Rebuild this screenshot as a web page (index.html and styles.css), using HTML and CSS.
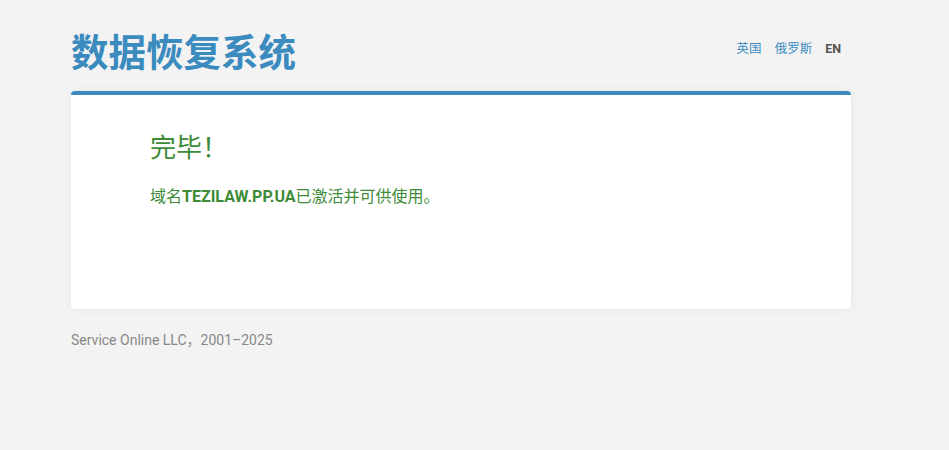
FILE: index.html
```html
<!DOCTYPE html>
<html lang="zh">
<head>
    <meta charset="UTF-8">
    <meta name="viewport" content="width=device-width, initial-scale=1.0">
    <title>数据恢复系统</title>
    <link rel="stylesheet" href="styles.css">
</head>
<body>

    <div class="page">
        <div class="header">
            <h1 class="logo">数据恢复系统</h1>
            <div class="langs">
                <a href="#">英国</a>
                <a href="#">俄罗斯</a>
                <span class="current">EN</span>
            </div>
        </div>

        <div class="card">
            <h2 class="done">完毕！</h2>
            <p class="message">域名<strong>TEZILAW.PP.UA</strong>已激活并可供使用。</p>
        </div>

        <div class="footer">Service Online LLC，2001–2025</div>
    </div>

</body>
</html>
```

FILE: styles.css
```css
body {
    margin: 0;
    background-color: #f3f3f3;
    font-family: Roboto, "Noto Sans CJK SC", sans-serif;
}

.page {
    width: 780px;
    margin-left: 71px;
}

.header {
    display: flex;
    justify-content: space-between;
    align-items: center;
    height: 91px;
}

.logo {
    margin: 16px 0 0;
    font-size: 37.5px;
    font-weight: bold;
    color: #3b8bbf;
    line-height: 1;
}

.langs {
    display: flex;
    align-items: baseline;
    gap: 13px;
    font-size: 12.5px;
    margin-right: 10px;
    margin-top: 4px;
}

.langs a {
    color: #3b8bbf;
    text-decoration: none;
}

.langs .current {
    color: #555;
    font-weight: bold;
}

.card {
    background-color: white;
    border-top: 4px solid #3b8bbf;
    border-radius: 4px;
    box-shadow: 0 0 10px rgba(0, 0, 0, 0.06);
    height: 218px;
    box-sizing: border-box;
    padding: 35px 79px;
}

.done {
    margin: 0;
    font-size: 26px;
    font-weight: normal;
    color: #3d8b37;
    line-height: 36px;
}

.message {
    margin: 17px 0 0;
    font-size: 16px;
    color: #3d8b37;
}

.footer {
    margin-top: 20px;
    font-size: 14px;
    color: #888;
}
```
